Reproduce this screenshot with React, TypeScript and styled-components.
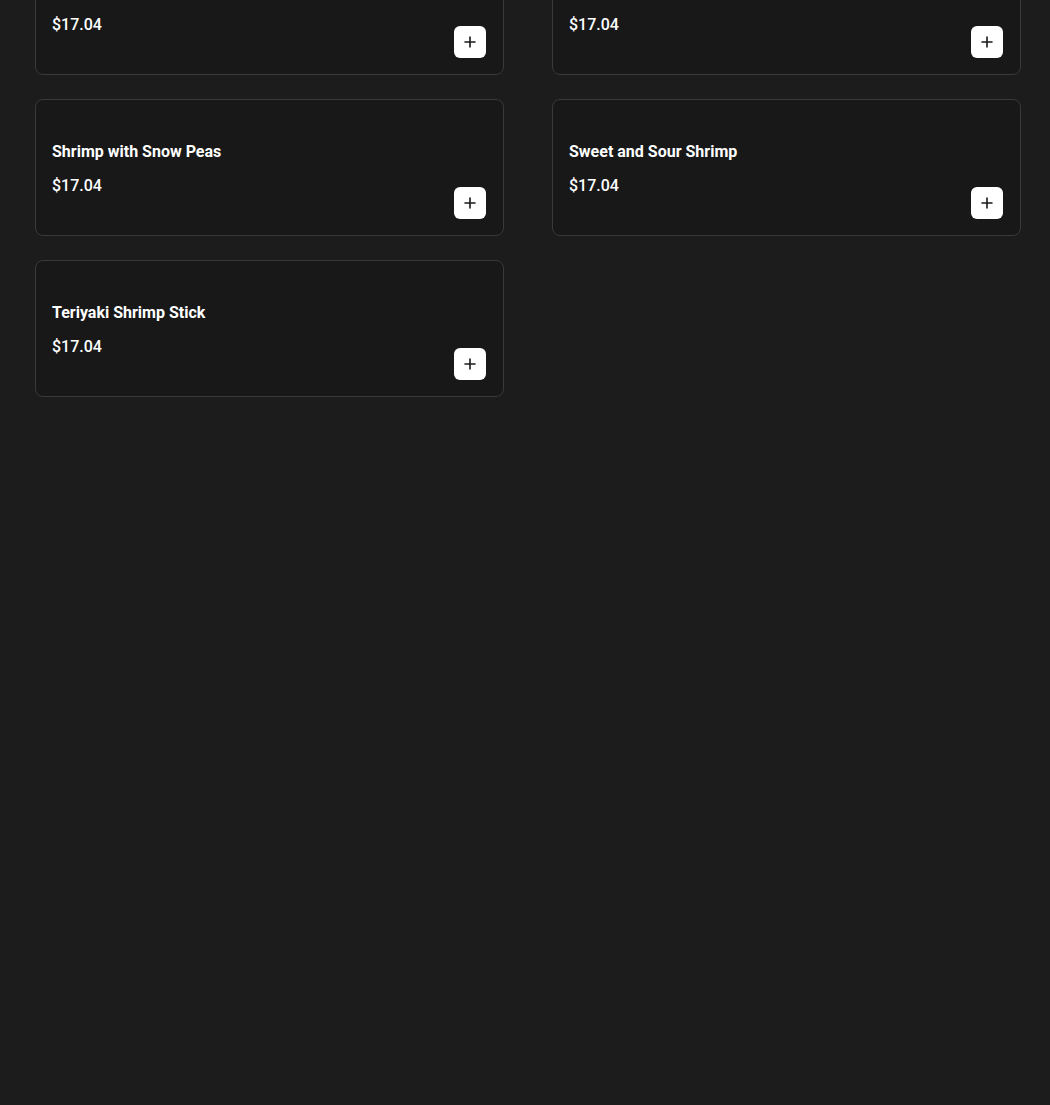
import React from 'react';
import styled, { createGlobalStyle } from 'styled-components';

const GlobalStyle = createGlobalStyle`
  html, body {
    margin: 0;
    padding: 0;
    background: #1c1c1c;
    min-height: 100%;
  }
  body {
    font-family: Roboto, "Liberation Sans", Arial, sans-serif;
    color: #ffffff;
    overflow: hidden;
  }
`;

// The list is shown scrolled: the first row is partly above the viewport
const Page = styled.div`
  min-height: 1105px;
  background: #1c1c1c;
  box-sizing: border-box;
  padding: 0 29px 0 35px;
`;

const Grid = styled.div`
  display: grid;
  grid-template-columns: 1fr 1fr;
  column-gap: 48px;
  row-gap: 24px;
  margin-top: -62px;
`;

const Card = styled.div`
  display: flex;
  align-items: flex-end;
  justify-content: space-between;
  box-sizing: border-box;
  height: 137px;
  padding: 16px 17px 16px 16px;
  background: #181818;
  border: 1px solid #393939;
  border-radius: 8px;
`;

const Info = styled.div`
  display: flex;
  flex-direction: column;
  gap: 10px;
  padding-bottom: 21px;
`;

const Title = styled.div`
  font-size: 16px;
  font-weight: 700;
  line-height: 24px;
`;

const Price = styled.div`
  font-size: 16px;
  font-weight: 500;
  line-height: 24px;
`;

const AddButton = styled.button`
  display: flex;
  align-items: center;
  justify-content: center;
  width: 32px;
  height: 32px;
  padding: 0;
  background: #ffffff;
  border: none;
  border-radius: 6px;
  color: #1a1a1a;
  cursor: pointer;
  flex-shrink: 0;
`;

interface Item {
  id: number;
  name: string;
  price: string;
}

const items: Item[] = [
  { id: 1, name: 'Shrimp with Broccoli', price: '$17.04' },
  { id: 2, name: 'Shrimp with Mixed Vegetables', price: '$17.04' },
  { id: 3, name: 'Shrimp with Snow Peas', price: '$17.04' },
  { id: 4, name: 'Sweet and Sour Shrimp', price: '$17.04' },
  { id: 5, name: 'Teriyaki Shrimp Stick', price: '$17.04' },
];

const PlusIcon: React.FC = () => (
  <svg width="12" height="12" viewBox="0 0 12 12" fill="none">
    <path d="M6 1v10M1 6h10" stroke="currentColor" strokeWidth="1.6" strokeLinecap="round" />
  </svg>
);

const App: React.FC = () => (
  <>
    <GlobalStyle />
    <Page>
      <Grid>
        {items.map((item) => (
          <Card key={item.id}>
            <Info>
              <Title>{item.name}</Title>
              <Price>{item.price}</Price>
            </Info>
            <AddButton aria-label={`Add ${item.name}`}>
              <PlusIcon />
            </AddButton>
          </Card>
        ))}
      </Grid>
    </Page>
  </>
);

export default App;
